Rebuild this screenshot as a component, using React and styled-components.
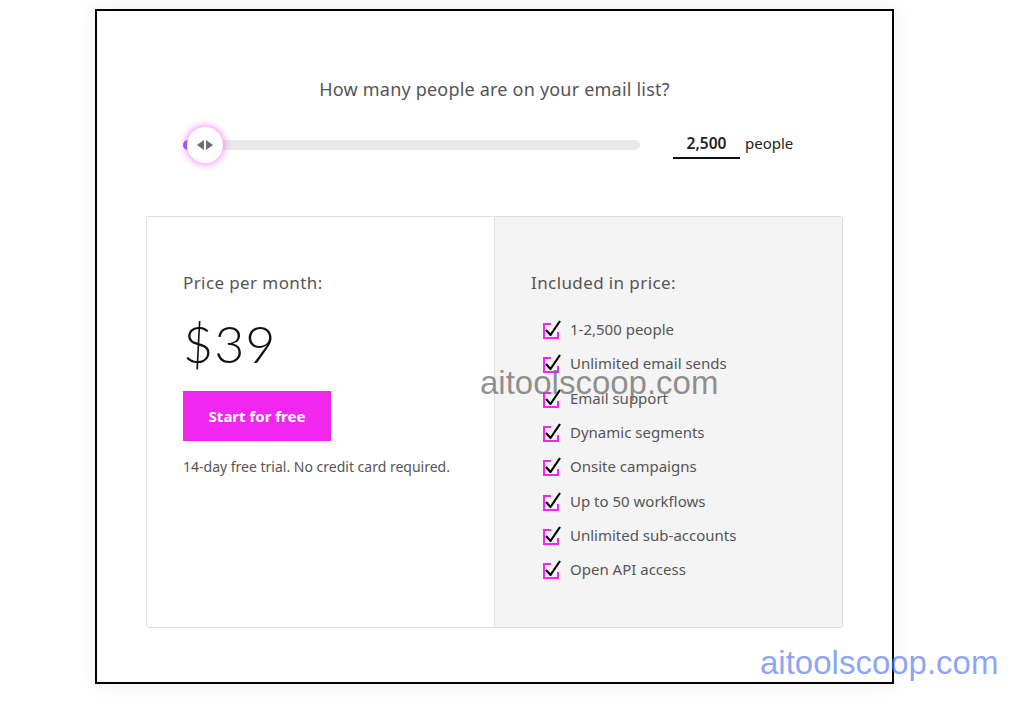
import React from "react";
import styled, { createGlobalStyle } from "styled-components";

const Global = createGlobalStyle`
  html, body { margin: 0; padding: 0; background: #fff; }
  body { font-family: "Noto Sans", "Lato", sans-serif; color: #555; }
`;

const Page = styled.div`
  position: relative;
  width: 1016px;
  height: 701px;
  overflow: hidden;
`;

const Frame = styled.div`
  box-sizing: border-box;
  width: 799px;
  height: 675px;
  margin: 9px 0 0 95px;
  border: 2px solid #000;
  box-shadow: 0 0 18px rgba(0, 0, 0, 0.07);
  padding: 66px 49px 0;
  display: flex;
  flex-direction: column;
  align-items: center;
`;

const Question = styled.h2`
  margin: 0;
  font-size: 18px;
  line-height: 24px;
  letter-spacing: 0.2px;
  font-weight: 400;
  color: #555;
`;

const SliderRow = styled.div`
  align-self: stretch;
  height: 40px;
  margin-top: 24px;
  padding-left: 37px;
  display: flex;
  align-items: center;
`;

const Track = styled.div`
  position: relative;
  width: 457px;
  height: 10px;
  border-radius: 5px;
  background: #e9e9e9;
`;

const Fill = styled.div`
  height: 100%;
  border-radius: 5px;
  background: linear-gradient(90deg, #6a6cf2, #d34af0);
`;

const Thumb = styled.div`
  position: absolute;
  top: 50%;
  left: 4px;
  width: 36px;
  height: 36px;
  margin-top: -18px;
  border-radius: 50%;
  background: #fff;
  box-shadow: 0 0 6px 2px rgba(240, 40, 238, 0.45);
  display: flex;
  align-items: center;
  justify-content: center;
  gap: 2px;
`;

const Arrow = styled.span`
  width: 0;
  height: 0;
  border-top: 5px solid transparent;
  border-bottom: 5px solid transparent;
  ${(p) => (p.dir === "left" ? "border-right: 7px solid #6d6d6d;" : "border-left: 7px solid #6d6d6d;")}
`;

const Count = styled.div`
  width: 67px;
  margin-left: 33px;
  padding-bottom: 3px;
  border-bottom: 2px solid #111;
  text-align: center;
  font-size: 15.5px;
  line-height: 22px;
  font-weight: 600;
  color: #222;
`;

const Unit = styled.span`
  margin-left: 5px;
  font-size: 15px;
  color: #222;
  transform: translateY(-2px);
`;

const Card = styled.div`
  align-self: stretch;
  margin-top: 51px;
  height: 410px;
  border: 1px solid #dedede;
  border-radius: 3px;
  display: grid;
  grid-template-columns: 347px 1fr;
  overflow: hidden;
`;

const Column = styled.div`
  padding: 55px 36px 0;
  background: ${(p) => (p.shaded ? "#f4f4f4" : "#fff")};
  border-left: ${(p) => (p.shaded ? "1px solid #dedede" : "none")};
`;

const Label = styled.div`
  font-size: 17px;
  line-height: 22px;
  letter-spacing: 0.4px;
  color: #555;
`;

const Price = styled.div`
  margin-top: 19px;
  font-family: "Lato", "Noto Sans", sans-serif;
  font-size: 52px;
  line-height: 60px;
  color: #111;
  font-weight: 300;
  letter-spacing: 1px;
`;

const StartButton = styled.button`
  margin-top: 18px;
  width: 148px;
  height: 50px;
  border: none;
  border-radius: 0;
  background: #f126ef;
  color: #fff;
  font-family: inherit;
  font-size: 15px;
  font-weight: 700;
  cursor: pointer;
`;

const Note = styled.p`
  margin: 16px 0 0;
  font-size: 14px;
  line-height: 20px;
  color: #555;
`;

const List = styled.ul`
  list-style: none;
  margin: 18px 0 0;
  padding: 0 0 0 11px;
`;

const Item = styled.li`
  display: flex;
  align-items: center;
  height: 34.3px;
  font-size: 15px;
  color: #555;
`;

const CheckIcon = styled.svg`
  width: 22px;
  height: 22px;
  margin-right: 6px;
  flex: none;
`;

const Watermark = styled.div`
  position: absolute;
  font-family: "Liberation Sans", Arial, sans-serif;
  font-size: 33px;
  line-height: 36px;
  left: ${(p) => p.x}px;
  top: ${(p) => p.y}px;
  color: ${(p) => p.color};
  pointer-events: none;
`;

const features = [
  "1-2,500 people",
  "Unlimited email sends",
  "Email support",
  "Dynamic segments",
  "Onsite campaigns",
  "Up to 50 workflows",
  "Unlimited sub-accounts",
  "Open API access",
];

function Check() {
  return (
    <CheckIcon viewBox="0 0 22 22">
      <path d="M9 6H2v14h14v-6" fill="none" stroke="#f126ef" strokeWidth="2" />
      <path d="M4 12l4.5 5L18 3" fill="none" stroke="#000" strokeWidth="2.2" strokeLinejoin="round" />
    </CheckIcon>
  );
}

export default function App() {
  return (
    <Page>
      <Global />
      <Frame>
        <Question>How many people are on your email list?</Question>
        <SliderRow>
          <Track>
            <Fill style={{ width: "12px" }} />
            <Thumb>
              <Arrow dir="left" />
              <Arrow dir="right" />
            </Thumb>
          </Track>
          <Count>2,500</Count>
          <Unit>people</Unit>
        </SliderRow>
        <Card>
          <Column>
            <Label>Price per month:</Label>
            <Price>$39</Price>
            <StartButton>Start for free</StartButton>
            <Note>14-day free trial. No credit card required.</Note>
          </Column>
          <Column shaded>
            <Label>Included in price:</Label>
            <List>
              {features.map((f) => (
                <Item key={f}>
                  <Check />
                  {f}
                </Item>
              ))}
            </List>
          </Column>
        </Card>
      </Frame>
      <Watermark x={480} y={365} color="rgba(110,110,110,0.75)">aitoolscoop.com</Watermark>
      <Watermark x={760} y={645} color="rgba(90,125,240,0.7)">aitoolscoop.com</Watermark>
    </Page>
  );
}
